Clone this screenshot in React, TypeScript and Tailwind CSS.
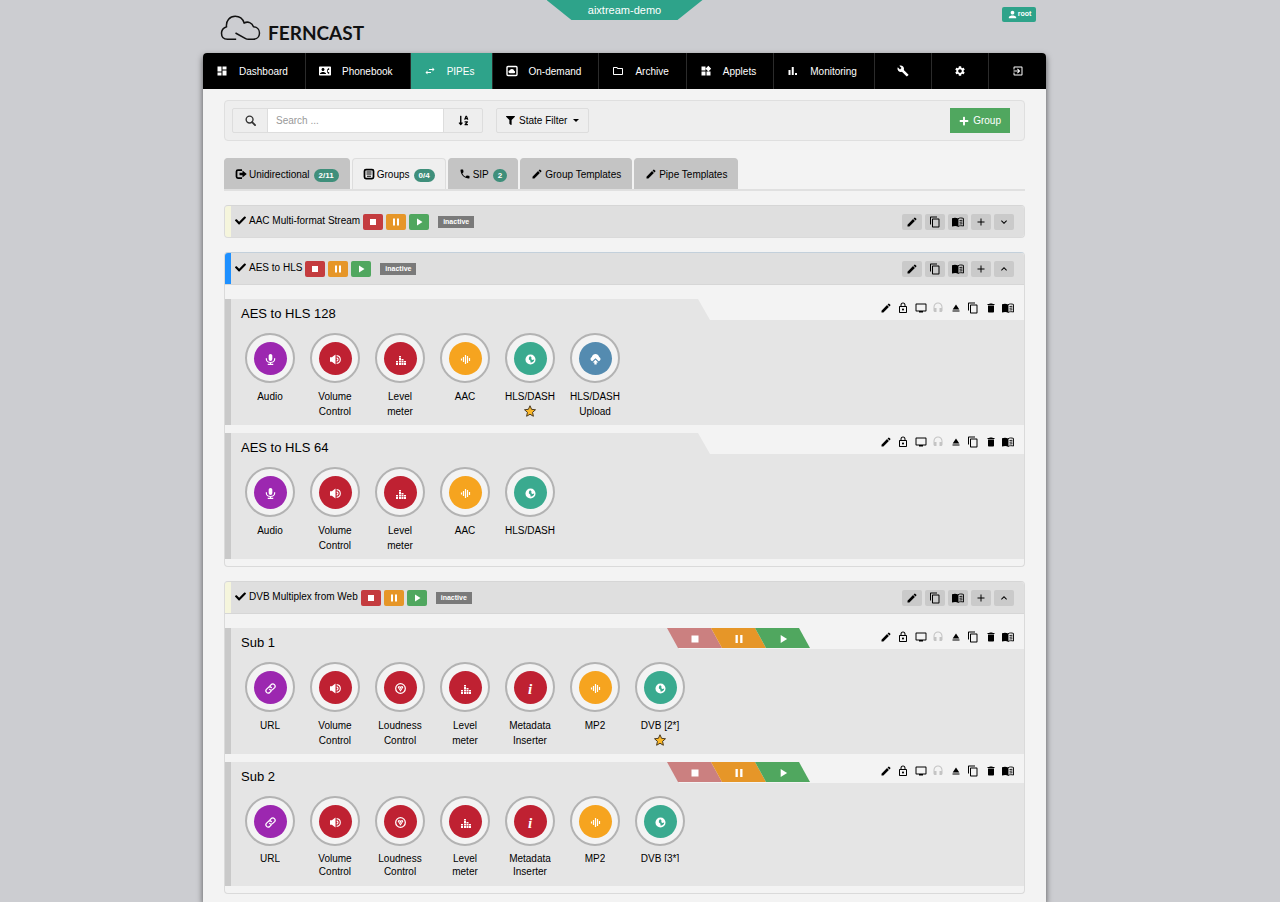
import { ReactNode, useState } from 'react'
import {
  MdAdd,
  MdBuild,
  MdContactPhone,
  MdContentCopy,
  MdDashboard,
  MdDelete,
  MdEdit,
  MdEject,
  MdExitToApp,
  MdHeadset,
  MdKeyboardArrowDown,
  MdKeyboardArrowUp,
  MdOutlineFolder,
  MdOutlineLock,
  MdPause,
  MdPerson,
  MdPhone,
  MdPlayArrow,
  MdSettings,
  MdStop,
  MdSwapHoriz,
  MdTv,
  MdWidgets,
} from 'react-icons/md'
import { FaCheck, FaFilter, FaPlus, FaSortAlphaDown } from 'react-icons/fa'

type IconProps = { className?: string }

const SearchIcon = ({ className }: IconProps) => (
  <svg viewBox="0 0 24 24" className={className} fill="none" stroke="currentColor">
    <circle cx="10" cy="10" r="7.5" strokeWidth="3" />
    <path d="M15.500 15.500L22 22" strokeWidth="4" strokeLinecap="round" />
  </svg>
)

const CloudFrameIcon = ({ className }: IconProps) => (
  <svg viewBox="0 0 24 24" className={className}>
    <rect x="2" y="3" width="20" height="18" rx="2" fill="none" stroke="currentColor" strokeWidth="2.800" />
    <path d="M8 16.500a3 3 0 0 1-.3-6 4.600 4.600 0 0 1 8.600 1 2.600 2.600 0 0 1 .2 5z" fill="currentColor" />
  </svg>
)

const BarsIcon = ({ className }: IconProps) => (
  <svg viewBox="0 0 24 24" className={className} fill="currentColor">
    <path d="M3 10h4v10H3zM9.500 4h4v16h-4zM16 16h4v4h-4z" />
  </svg>
)

const LogOutIcon = ({ className }: IconProps) => (
  <svg viewBox="0 0 24 24" className={className}>
    <path d="M14 4H6a3 3 0 0 0-3 3v10a3 3 0 0 0 3 3h8" fill="none" stroke="currentColor" strokeWidth="3.500" />
    <path d="M9 9.500h6V5l8.500 7-8.500 7v-4.500H9z" fill="currentColor" />
  </svg>
)

const GroupIcon = ({ className }: IconProps) => (
  <svg viewBox="0 0 24 24" className={className} fill="none" stroke="currentColor">
    <rect x="3" y="3" width="18" height="18" rx="3" strokeWidth="3.500" />
    <path d="M7 8h10M7 12h10M8 16.500h8" strokeWidth="2" />
  </svg>
)

const BookIcon = ({ className }: IconProps) => (
  <svg viewBox="0 0 24 24" className={className}>
    <path d="M12 5C9 3 4 3 0 4.500V21c4-1.500 9-1.500 12 0z" fill="currentColor" />
    <path
      d="M12 5.500c3-2 7-2 11-.6V20c-4-1-8-1-11 1zM15 9l6-.5M15 12.500l6-.5M15 16l6-.5"
      fill="none"
      stroke="currentColor"
      strokeWidth="1.800"
    />
  </svg>
)

const MicIcon = ({ className }: IconProps) => (
  <svg viewBox="0 0 24 24" className={className}>
    <rect x="8" y="0" width="8" height="15" rx="4" fill="currentColor" />
    <path d="M3 9v2.500a9 7 0 0 0 18 0V9M12 18v4M6 22.500h12" fill="none" stroke="currentColor" strokeWidth="2.600" />
  </svg>
)

const VolumeIcon = ({ className }: IconProps) => (
  <svg viewBox="0 0 24 24" className={className}>
    <path d="M0 7h4l8-6v22l-8-6H0z" fill="currentColor" />
    <path
      d="M14.500 3.500c5 .5 8 4 8 8.500s-3 8-8 8.500M14.500 8.500c2 .5 3 1.500 3 3.500s-1 3-3 3.500"
      fill="none"
      stroke="currentColor"
      strokeWidth="2.400"
    />
  </svg>
)

const LevelIcon = ({ className }: IconProps) => (
  <svg viewBox="0 0 11 11" className={className} fill="currentColor">
    <path d="M1 7h2v1.600H1zM1 9h2v2H1zM4 2h2v1.600H4zM4 4h2v2.600H4zM4 7h2v1.600H4zM4 9h2v2H4zM6.500 5h2v1.600h-2zM6.500 7h2v1.600h-2zM6.500 9h2v2h-2zM9 7h2v1.600H9zM9 9h2v2H9z" />
  </svg>
)

const WaveIcon = ({ className }: IconProps) => (
  <svg viewBox="0 0 11 11" className={className} stroke="currentColor" strokeWidth="1.200">
    <path d="M1.500 4.500v2M3.500 3v5M5.500 1v9M7.500 2v7M9.500 4v3" />
  </svg>
)

const GlobeIcon = ({ className }: IconProps) => (
  <svg viewBox="0 0 24 24" className={className}>
    <path
      fillRule="evenodd"
      fill="currentColor"
      d="M12 1a11 11 0 1 0 0 22 11 11 0 0 0 0-22zM11 4.500L8.500 8v4l3 2 1 5c5-.5 7.500-3.500 7.500-7l-4 1-2.500-2 1-3z"
    />
  </svg>
)

const UploadIcon = ({ className }: IconProps) => (
  <svg viewBox="0 0 24 24" className={className} fill="currentColor">
    <path d="M5 16a5 5 0 0 1-1-9.500C5 2.500 8.500 0 12 0s7 2.500 8 6.500A5 5 0 0 1 19 16l-7-6.500z" />
    <path d="M12 12.500l6 6h-3.500V23h-5v-4.500H6z" />
  </svg>
)

const LinkIcon = ({ className }: IconProps) => (
  <svg viewBox="0 0 24 24" className={className} fill="none" stroke="currentColor" strokeWidth="2.800" strokeLinecap="round">
    <path d="M10 14a5 5 0 0 0 7 0l4-4a5 5 0 0 0-7-7l-3 3" />
    <path d="M14 10a5 5 0 0 0-7 0l-4 4a5 5 0 0 0 7 7l3-3" />
  </svg>
)

const LoudnessIcon = ({ className }: IconProps) => (
  <svg viewBox="0 0 24 24" className={className} fill="none" stroke="currentColor">
    <circle cx="12" cy="12" r="10.500" strokeWidth="2.800" />
    <path d="M6.500 8l5.500 9 5.500-9M6.500 8h4l1.500 3 1.500-3h4" strokeWidth="2.200" />
  </svg>
)

const InfoIcon = () => (
  <span className="font-['Liberation_Serif',serif] text-[15px] leading-3 font-bold italic">i</span>
)

const StarIcon = ({ className }: IconProps) => (
  <svg viewBox="0 0 24 24" className={className}>
    <path
      d="M12 1.500l3.200 7.200 7.800.8-5.900 5.200 1.700 7.800-6.800-4-6.800 4 1.700-7.800L1 9.500l7.800-.8z"
      fill="#fbb829"
      stroke="#4a3a20"
      strokeWidth="2"
      strokeLinejoin="round"
    />
  </svg>
)

const navItems = [
  { label: 'Dashboard', icon: MdDashboard },
  { label: 'Phonebook', icon: MdContactPhone },
  { label: 'PIPEs', icon: MdSwapHoriz },
  { label: 'On-demand', icon: CloudFrameIcon },
  { label: 'Archive', icon: MdOutlineFolder },
  { label: 'Applets', icon: MdWidgets },
  { label: 'Monitoring', icon: BarsIcon },
]

const navTools = [
  { label: 'Tools', icon: MdBuild },
  { label: 'Settings', icon: MdSettings },
  { label: 'Logout', icon: MdExitToApp },
]

const tabs = [
  { label: 'Unidirectional', icon: LogOutIcon, badge: '2/11' },
  { label: 'Groups', icon: GroupIcon, badge: '0/4' },
  { label: 'SIP', icon: MdPhone, badge: '2' },
  { label: 'Group Templates', icon: MdEdit },
  { label: 'Pipe Templates', icon: MdEdit },
]

type Module = { lines: string[]; color: string; icon: ReactNode; star?: boolean }

const iconSize = 'size-[11px]'
const purple = 'bg-[#9c27b0]'
const red = 'bg-[#bf2132]'
const orange = 'bg-[#f6a41f]'
const teal = 'bg-[#3aaa8f]'

const audio: Module = { lines: ['Audio'], color: purple, icon: <MicIcon className={iconSize} /> }
const url: Module = { lines: ['URL'], color: purple, icon: <LinkIcon className={iconSize} /> }
const volume: Module = { lines: ['Volume', 'Control'], color: red, icon: <VolumeIcon className={iconSize} /> }
const loudness: Module = { lines: ['Loudness', 'Control'], color: red, icon: <LoudnessIcon className={iconSize} /> }
const level: Module = { lines: ['Level', 'meter'], color: red, icon: <LevelIcon className={iconSize} /> }
const metadata: Module = { lines: ['Metadata', 'Inserter'], color: red, icon: <InfoIcon /> }
const aac: Module = { lines: ['AAC'], color: orange, icon: <WaveIcon className={iconSize} /> }
const mp2: Module = { ...aac, lines: ['MP2'] }
const hls: Module = { lines: ['HLS/DASH'], color: teal, icon: <GlobeIcon className={iconSize} /> }
const upload: Module = { lines: ['HLS/DASH', 'Upload'], color: 'bg-[#548bb0]', icon: <UploadIcon className={iconSize} /> }

type PipeData = { name: string; modules: Module[]; controls?: boolean; compact?: boolean }
type GroupData = { name: string; strip: string; border: string; pipes: PipeData[] }

const groups: GroupData[] = [
  { name: 'AAC Multi-format Stream', strip: 'border-l-[#f5f5dc]', border: 'border-t-[#d6d6d6]', pipes: [] },
  {
    name: 'AES to HLS',
    strip: 'border-l-[#1e90ff]',
    border: 'border-t-[#c3d0db]',
    pipes: [
      { name: 'AES to HLS 128', modules: [audio, volume, level, aac, { ...hls, star: true }, upload] },
      { name: 'AES to HLS 64', modules: [audio, volume, level, aac, hls] },
    ],
  },
  {
    name: 'DVB Multiplex from Web',
    strip: 'border-l-[#f5f5dc]',
    border: 'border-t-[#d6d6d6]',
    pipes: [
      {
        name: 'Sub 1',
        controls: true,
        modules: [url, volume, loudness, level, metadata, mp2, { ...hls, lines: ['DVB [2*]'], star: true }],
      },
      {
        name: 'Sub 2',
        controls: true,
        compact: true,
        modules: [url, volume, loudness, level, metadata, mp2, { ...hls, lines: ['DVB [3*]'] }],
      },
    ],
  },
]

const groupActions = [
  { label: 'Edit group', icon: MdEdit },
  { label: 'Copy group', icon: MdContentCopy },
  { label: 'Group log', icon: BookIcon },
  { label: 'Add pipe', icon: MdAdd },
]

const pipeActions = [
  { label: 'Edit pipe', icon: MdEdit },
  { label: 'Lock pipe', icon: MdOutlineLock },
  { label: 'Monitor', icon: MdTv },
  { label: 'Listen', icon: MdHeadset, disabled: true },
  { label: 'Eject', icon: MdEject },
  { label: 'Copy pipe', icon: MdContentCopy },
  { label: 'Delete pipe', icon: MdDelete },
  { label: 'Pipe log', icon: BookIcon },
]

const controls = [
  { label: 'Stop', icon: MdStop, color: 'bg-[#c43c3f]', tabColor: 'bg-[#cb8080]' },
  { label: 'Pause', icon: MdPause, color: 'bg-[#e69628]', tabColor: 'bg-[#e69628]' },
  { label: 'Start', icon: MdPlayArrow, color: 'bg-[#50a75f]', tabColor: 'bg-[#50a75f]' },
]

const Logo = () => (
  <a href="#" className="flex items-end text-[#111]">
    <svg viewBox="0 0 122 78" className="h-[26px] w-[41px]" fill="none" stroke="currentColor" strokeWidth="4.500">
      <path d="M48 73H22C11 73 4 66 4 55c0-10 6-17 15-20C17 17 29 4 45 4c13 0 23 8 27 20 11-6 24-1 28 11 11 1 18 9 18 19 0 11-8 19-19 19H85c-5 0-7-1-10-3L46 54" />
    </svg>
    <span className="ml-[7px] font-[Lato,sans-serif] text-[19px] leading-[17px] font-bold">FERNCAST</span>
  </a>
)

const Header = () => (
  <header className="relative flex h-[53px] items-start justify-between pr-[10px] pl-[17px]">
    <div className="pt-[15px]">
      <Logo />
    </div>
    <div className="absolute inset-x-0 top-0 mx-auto h-5 w-[156px] bg-[#2ea38a] text-center text-[11px] leading-5 text-white [clip-path:polygon(0_0,100%_0,84%_100%,16%_100%)]">
      aixtream-demo
    </div>
    <button className="mt-[7px] flex h-[15px] w-[34px] items-center justify-center rounded-xs bg-[#2ea38a] text-[7px] font-bold text-white">
      <MdPerson className="size-[11px]" />
      root
    </button>
  </header>
)

const Nav = () => (
  <nav className="flex h-9 overflow-hidden rounded-t bg-black text-white">
    {navItems.map(({ label, icon: Icon }) => (
      <a
        key={label}
        href="#"
        className={`flex flex-auto items-center border-r border-[#2b2b2b] pl-[13px] ${
          label === 'PIPEs' ? 'bg-[#2ea38a]' : ''
        }`}
      >
        <Icon className="mr-[11px] size-3 shrink-0" />
        <span className="pr-[17px]">{label}</span>
      </a>
    ))}
    {navTools.map(({ label, icon: Icon }) => (
      <a
        key={label}
        href="#"
        aria-label={label}
        className="flex w-[57px] items-center justify-center border-r border-[#2b2b2b] last:border-r-0"
      >
        <Icon className="size-3" />
      </a>
    ))}
  </nav>
)

const Toolbar = () => {
  const [search, setSearch] = useState('')

  return (
    <div className="flex items-center rounded border border-[#dfdfdf] bg-[#eee] py-[7px] pr-[14px] pl-[7px]">
      <div className="flex h-[25px] rounded-xs border border-[#ddd]">
        <label htmlFor="search" aria-label="Search" className="flex w-[34px] items-center justify-center">
          <SearchIcon className="size-[11px] text-[#333]" />
        </label>
        <input
          id="search"
          value={search}
          onChange={(e) => setSearch(e.target.value)}
          placeholder="Search ..."
          className="w-[177px] border-x border-[#ddd] bg-white px-2 outline-none placeholder:text-[#999]"
        />
        <button aria-label="Sort" className="flex w-[38px] items-center justify-center">
          <FaSortAlphaDown className="size-[11px]" />
        </button>
      </div>
      <button className="ml-[13px] flex h-[25px] items-center rounded-xs border border-[#ddd] px-[9px]">
        <FaFilter className="mr-1 size-[9px]" />
        State Filter
        <span className="ml-[6px] border-x-[3px] border-t-[3px] border-x-transparent border-t-black" />
      </button>
      <button className="ml-auto flex h-[25px] items-center bg-[#50a75f] px-[9px] text-white">
        <FaPlus className="mr-1 size-[10px]" />
        Group
      </button>
    </div>
  )
}

const Tabs = () => {
  const [active, setActive] = useState('Groups')

  return (
    <div role="tablist" className="mt-[17px] flex gap-[2px] border-b-2 border-[#e0e0e0]">
      {tabs.map(({ label, icon: Icon, badge }) => (
        <button
          key={label}
          role="tab"
          aria-selected={active === label}
          onClick={() => setActive(label)}
          className={`flex h-[31px] items-center rounded-t border border-b-0 px-[10px] ${
            active === label ? 'border-[#ddd] bg-[#efefef]' : 'border-[#c4c4c4] bg-[#c4c4c4]'
          }`}
        >
          <Icon className="mr-[2px] size-3" />
          {label}
          {badge && (
            <span className="mt-[2px] ml-1 rounded-full bg-[#3f8f7b] px-[5px] text-[8px] leading-[13px] font-bold text-white">
              {badge}
            </span>
          )}
        </button>
      ))}
    </div>
  )
}

const ModuleItem = ({ module, compact }: { module: Module; compact?: boolean }) => (
  <div className="flex w-[50px] flex-col items-center">
    <button
      aria-label={module.lines.join(' ')}
      className="flex size-[50px] items-center justify-center rounded-full border-2 border-[#b3b3b3] bg-[#f3f3f3]"
    >
      <span className={`flex size-[33px] items-center justify-center rounded-full pt-[3px] text-white ${module.color}`}>
        {module.icon}
      </span>
    </button>
    <div
      className={`flex flex-col items-center leading-[15px] whitespace-nowrap ${compact ? 'mt-[5px]' : 'mt-[6px]'}`}
    >
      {module.lines.map((line, i) => (
        <span key={line} className={compact ? (i === 0 ? 'h-[11px] overflow-hidden' : 'pt-[2px]') : ''}>
          {line}
        </span>
      ))}
      {module.star && <StarIcon className="mt-px size-3" />}
    </div>
  </div>
)

const Pipe = ({ pipe }: { pipe: PipeData }) => (
  <div className="border-l-[6px] border-[#c9c9c9]">
    <div className="flex h-[21px]">
      <h3
        className={`h-[21px] bg-[#e5e5e5] pt-1 pl-[10px] text-[13px] leading-[21px] ${
          pipe.controls ? 'w-[448px]' : 'w-[479px] [clip-path:polygon(0_0,467px_0,100%_100%,0_100%)]'
        }`}
      >
        {pipe.name}
      </h3>
      {pipe.controls && (
        <div className="-ml-3 flex">
          {controls.map(({ label, icon: Icon, tabColor }) => (
            <button
              key={label}
              aria-label={label}
              className={`-mr-[11px] flex h-5 w-[55px] items-center justify-center pt-[2px] text-white [clip-path:polygon(0_0,44px_0,100%_100%,11px_100%)] ${tabColor}`}
            >
              <Icon className="size-[14px]" />
            </button>
          ))}
        </div>
      )}
      <div className="mr-[10px] ml-auto flex w-[134px] items-center justify-between pb-[3px]">
        {pipeActions.map(({ label, icon: Icon, disabled }) => (
          <button key={label} aria-label={label} disabled={disabled} className="disabled:text-[#c4c4c4]">
            <Icon className="size-3" />
          </button>
        ))}
      </div>
    </div>
    <div className={`flex gap-[15px] bg-[#e5e5e5] pt-[13px] pl-[14px] ${pipe.compact ? 'h-[103px]' : 'h-[105px]'}`}>
      {pipe.modules.map((module) => (
        <ModuleItem key={module.lines.join(' ')} module={module} compact={pipe.compact} />
      ))}
    </div>
  </div>
)

const Group = ({ group }: { group: GroupData }) => {
  const [open, setOpen] = useState(group.pipes.length > 0)
  const Chevron = open ? MdKeyboardArrowUp : MdKeyboardArrowDown

  return (
    <section className={`overflow-hidden rounded border border-[#dadada] ${group.border}`}>
      <div className={`flex h-[31px] items-center border-l-[6px] bg-[#dfdfdf] pr-[10px] pl-[4px] ${group.strip}`}>
        <FaCheck className="mr-[3px] mb-[3px] size-[11px]" />
        <h2 className="mb-[3px]">{group.name}</h2>
        <div className="ml-[3px] flex gap-[3px]">
          {controls.map(({ label, icon: Icon, color }) => (
            <button
              key={label}
              aria-label={label}
              className={`flex h-4 w-5 items-center justify-center rounded-xs pt-px text-white ${color}`}
            >
              <Icon className="size-3" />
            </button>
          ))}
        </div>
        <span className="ml-[9px] bg-[#7a7a7a] px-[5px] text-[7px] leading-3 font-bold text-white">inactive</span>
        <div className="ml-auto flex gap-[3px]">
          {groupActions.map(({ label, icon: Icon }) => (
            <button
              key={label}
              aria-label={label}
              className="flex h-4 w-5 items-center justify-center rounded-xs bg-[#cacaca]"
            >
              <Icon className="size-3" />
            </button>
          ))}
          <button
            aria-label="Toggle group"
            onClick={() => setOpen(!open)}
            className="flex h-4 w-5 items-center justify-center rounded-xs bg-[#cacaca]"
          >
            <Chevron className="size-3" />
          </button>
        </div>
      </div>
      {open && (
        <div className="flex flex-col gap-2 border-t border-[#d6d6d6] pt-[14px] pb-[7px]">
          {group.pipes.map((pipe) => (
            <Pipe key={pipe.name} pipe={pipe} />
          ))}
        </div>
      )}
    </section>
  )
}

const App = () => {
  return (
    <div className="flex min-h-screen flex-col bg-[#cccdd1] pr-[31px] font-['Liberation_Sans',Arial,sans-serif] text-[10px] text-black">
      <div className="mx-auto flex w-full max-w-[843px] flex-1 flex-col">
        <Header />
        <div className="flex-1 rounded-t bg-[#f3f3f3] shadow-[0_3px_6px_rgba(0,0,0,0.6)]">
          <Nav />
          <main className="px-[21px] pt-[11px] pb-2">
            <Toolbar />
            <Tabs />
            <div className="mt-[14px] flex flex-col gap-[14px]">
              {groups.map((group) => (
                <Group key={group.name} group={group} />
              ))}
            </div>
          </main>
        </div>
      </div>
    </div>
  )
}

export default App
